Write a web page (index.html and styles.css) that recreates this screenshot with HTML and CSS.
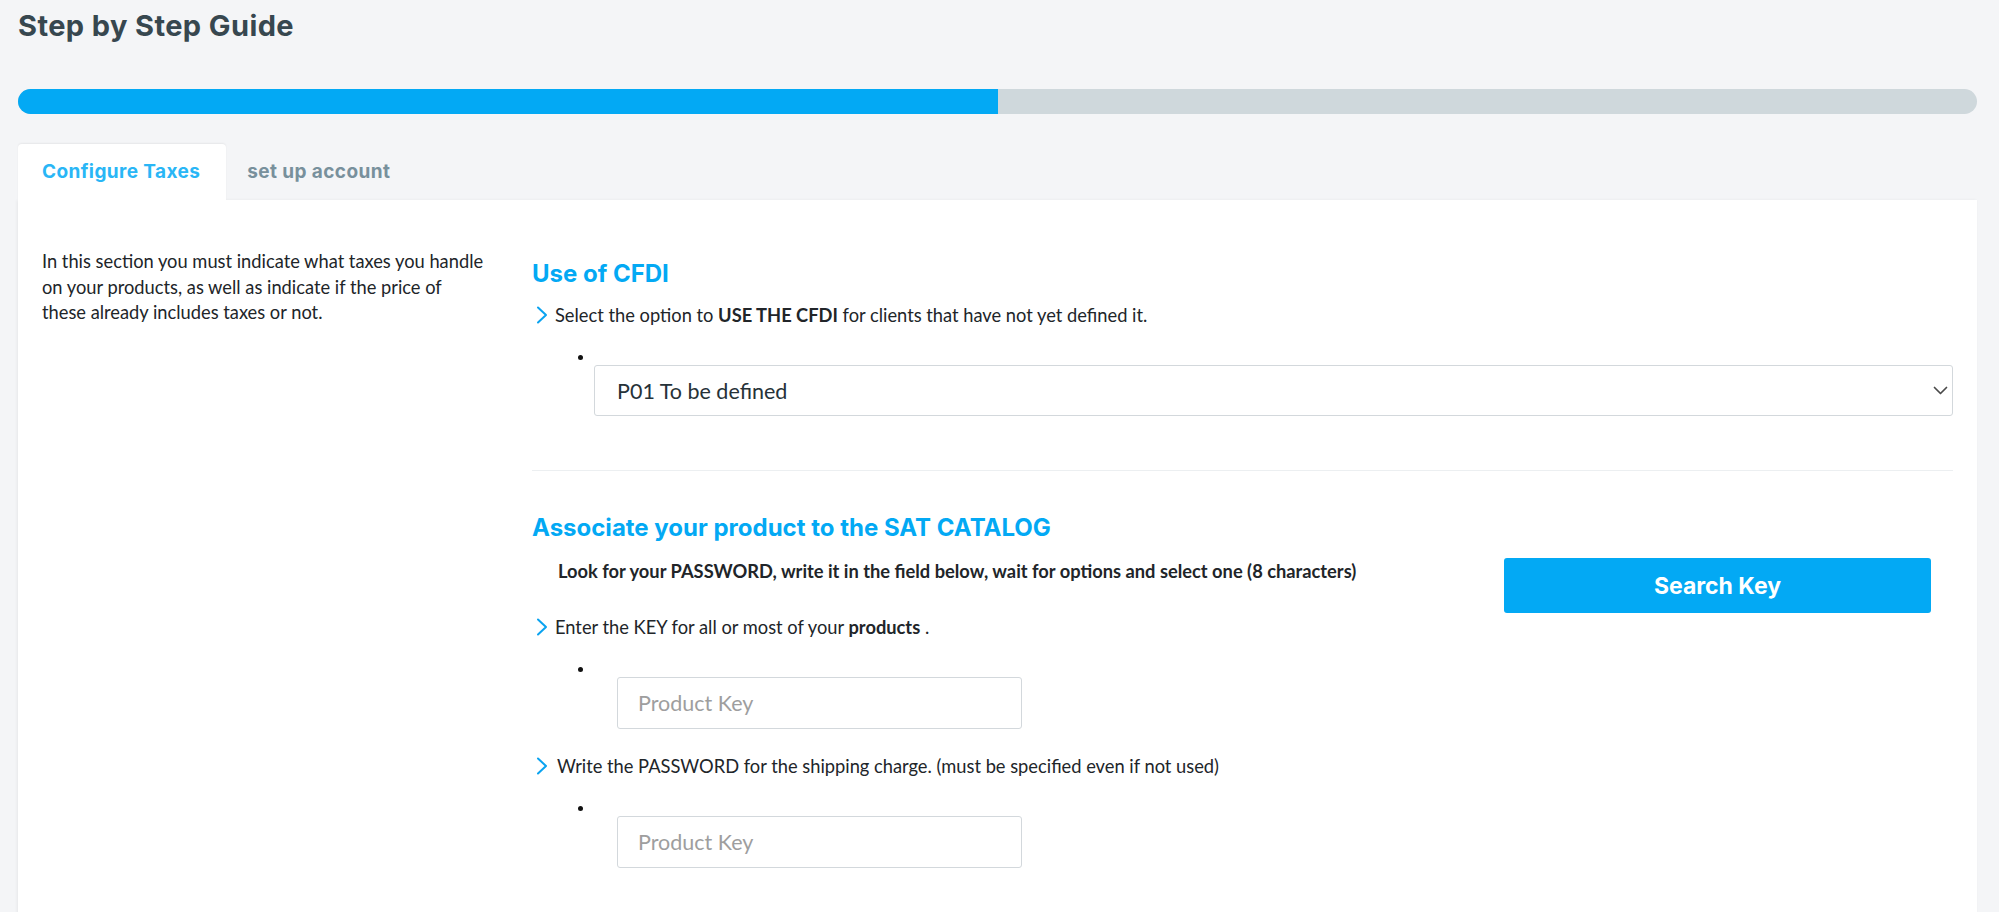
FILE: index.html
```html
<!DOCTYPE html>
<html lang="en">
<head>
<meta charset="utf-8">
<title>Step by Step Guide</title>
<link rel="stylesheet" href="styles.css">
</head>
<body>
<div class="page">
  <h1 class="page-title">Step by Step Guide</h1>

  <div class="progress">
    <div class="progress-fill" style="width: 50%"></div>
  </div>

  <div class="tabs">
    <div class="tab tab-active">Configure Taxes</div>
    <div class="tab">set up account</div>
  </div>

  <div class="card">
    <div class="intro">
      <p>In this section you must indicate what taxes you handle on your products, as well as indicate if the price of these already includes taxes or not.</p>
    </div>

    <div class="settings">
      <section class="block">
        <h2 class="block-title">Use of CFDI</h2>
        <div class="step">
          <svg class="chev" viewBox="0 0 12 18" width="12" height="18"><polyline points="2,1.5 10,9 2,16.5" fill="none" stroke="#0aa3f0" stroke-width="2" stroke-linecap="round" stroke-linejoin="round"/></svg>
          <span>Select the option to <b>USE THE CFDI</b> for clients that have not yet defined it.</span>
        </div>
        <ul class="fields">
          <li class="field field-select">
            <div class="select-wrap">
              <select class="select">
                <option>P01 To be defined</option>
              </select>
              <svg class="select-arrow" viewBox="0 0 15 9" width="15" height="9"><polyline points="1.5,1.5 7.5,7.5 13.5,1.5" fill="none" stroke="#4a4a4a" stroke-width="1.7" stroke-linecap="round" stroke-linejoin="round"/></svg>
            </div>
          </li>
        </ul>
      </section>

      <hr class="sep">

      <section class="block">
        <h2 class="block-title">Associate your product to the SAT CATALOG</h2>
        <div class="search-row">
          <p class="search-text">Look for your PASSWORD, write it in the field below, wait for options and select one (8 characters)</p>
          <button class="btn-search">Search Key</button>
        </div>
        <div class="step">
          <svg class="chev" viewBox="0 0 12 18" width="12" height="18"><polyline points="2,1.5 10,9 2,16.5" fill="none" stroke="#0aa3f0" stroke-width="2" stroke-linecap="round" stroke-linejoin="round"/></svg>
          <span>Enter the KEY for all or most of your <b>products</b> .</span>
        </div>
        <ul class="fields">
          <li class="field field-input">
            <input class="input" type="text" placeholder="Product Key">
          </li>
        </ul>
        <div class="step step-2">
          <svg class="chev" viewBox="0 0 12 18" width="12" height="18"><polyline points="2,1.5 10,9 2,16.5" fill="none" stroke="#0aa3f0" stroke-width="2" stroke-linecap="round" stroke-linejoin="round"/></svg>
          <span>Write the PASSWORD for the shipping charge. (must be specified even if not used)</span>
        </div>
        <ul class="fields">
          <li class="field field-input">
            <input class="input" type="text" placeholder="Product Key">
          </li>
        </ul>
      </section>
    </div>
  </div>
</div>
</body>
</html>
```

FILE: styles.css
```css
* { box-sizing: border-box; }

html, body {
  margin: 0;
  padding: 0;
  background: #f4f5f7;
  height: 100%;
  overflow: hidden;
}

body {
  font-family: "Lato", "Open Sans", sans-serif;
  color: #212529;
  font-size: 18.3px;
}

.page {
  padding: 10px 22px 0 18px;
}

.page-title {
  margin: 0;
  font-family: "Inter", "Open Sans", sans-serif;
  font-weight: 700;
  font-size: 29px;
  line-height: 32px;
  color: #37474f;
  letter-spacing: 0.4px;
}

.progress {
  margin-top: 47px;
  height: 25px;
  background: #cfd8dc;
  border-radius: 13px;
  overflow: hidden;
}

.progress-fill {
  height: 100%;
  background: #03a9f4;
}

.tabs {
  margin-top: 30px;
  display: flex;
  height: 56px;
}

.tab {
  font-family: "Inter", "Open Sans", sans-serif;
  font-weight: 700;
  font-size: 19px;
  line-height: 56px;
  padding: 0 21px;
  color: #78909c;
  letter-spacing: 0.4px;
}

.tab-active {
  background: #fff;
  color: #29b6f6;
  padding: 0 26px 0 24px;
  border-radius: 4px 4px 0 0;
  box-shadow: 0 -1px 2px rgba(0, 0, 0, 0.06);
}

.card {
  background: #fff;
  box-shadow: -1px 0 3px rgba(0, 0, 0, 0.06);
  display: grid;
  grid-template-columns: 466px 1fr;
  column-gap: 24px;
  padding: 49px 24px 60px 24px;
  min-height: 720px;
}

.intro p {
  margin: 0;
  width: 447px;
  font-size: 18.3px;
  line-height: 25.6px;
  color: #212529;
}

.settings {
  padding-top: 12px;
}

.block-title {
  margin: 0;
  font-family: "Inter", "Open Sans", sans-serif;
  font-weight: 700;
  font-size: 24px;
  line-height: 26px;
  color: #03a9f4;
  letter-spacing: 0;
}

.step {
  display: flex;
  align-items: center;
  gap: 7px;
  margin-top: 15px;
  line-height: 26px;
  font-size: 18.3px;
  color: #212529;
}

.step b { font-weight: 700; }

.chev { flex: none; margin-left: 4px; }

.step-2 { margin-top: 24px; gap: 9px; }

.fields {
  list-style: none;
  margin: 27px 0 0 0;
  padding: 0;
}

.field::before {
  content: "";
  display: block;
  width: 5px;
  height: 5px;
  border-radius: 50%;
  background: #111;
  margin: 6px 0 5px 46px;
}

.field-select { padding-left: 62px; }
.field-select::before { margin-left: -16px; }

.field-input { padding-left: 85px; }
.field-input::before { margin-left: -39px; }

.select-wrap {
  position: relative;
}

.select {
  display: block;
  width: 100%;
  height: 51px;
  padding: 0 40px 0 22px;
  font-family: "Lato", sans-serif;
  font-size: 21.5px;
  color: #263238;
  background: #fff;
  border: 1px solid #d3d8dc;
  border-radius: 3px;
  appearance: none;
  -webkit-appearance: none;
}

.select-arrow {
  position: absolute;
  right: 5px;
  top: 21px;
  pointer-events: none;
}

.sep {
  margin: 54px 0 0 0;
  border: 0;
  border-top: 1px solid #eceff1;
}

.block + .sep + .block { margin-top: 44px; }

.search-row {
  display: flex;
  align-items: flex-start;
  justify-content: space-between;
  margin-top: 17px;
  padding: 0 22px 0 26px;
}

.search-text {
  margin: 0;
  font-weight: 700;
  font-size: 18.3px;
  line-height: 26px;
  color: #212529;
}

.btn-search {
  width: 427px;
  height: 55px;
  border: 0;
  border-radius: 3px;
  background: #03a9f4;
  color: #fff;
  font-family: "Inter", "Open Sans", sans-serif;
  font-weight: 700;
  font-size: 23px;
  letter-spacing: 0;
  cursor: pointer;
}

.search-row + .step { margin-top: 1px; }

.input {
  display: block;
  width: 405px;
  height: 52px;
  padding: 0 20px;
  font-family: "Lato", sans-serif;
  font-size: 21.5px;
  color: #263238;
  border: 1px solid #d3d8dc;
  border-radius: 3px;
  background: #fff;
}

.input::placeholder { color: #9e9e9e; }
```
